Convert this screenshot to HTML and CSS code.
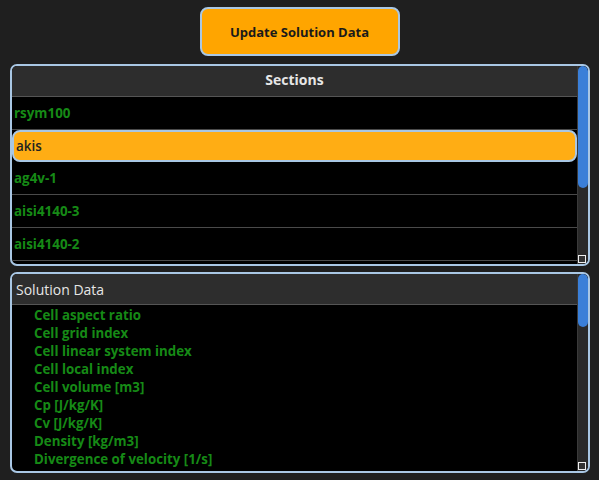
FILE: index.html
```html
<!DOCTYPE html>
<html lang="en">
<head>
    <meta charset="UTF-8">
    <title>Solution Data</title>
    <link rel="stylesheet" href="styles.css">
</head>
<body>

<div class="top">
    <button class="update-btn">Update Solution Data</button>
</div>

<!-- Sections list -->
<div class="panel sections">
    <div class="panel-body">
        <div class="panel-head center">Sections</div>
        <div class="rows">
            <div class="row">rsym100</div>
            <div class="row selected">akis</div>
            <div class="row">ag4v-1</div>
            <div class="row">aisi4140-3</div>
            <div class="row">aisi4140-2</div>
        </div>
    </div>
    <div class="scroll">
        <div class="thumb thumb-sections"></div>
        <div class="grip"></div>
    </div>
</div>

<!-- Solution data fields -->
<div class="panel data">
    <div class="panel-body">
        <div class="panel-head">Solution Data</div>
        <ul class="fields">
            <li>Cell aspect ratio</li>
            <li>Cell grid index</li>
            <li>Cell linear system index</li>
            <li>Cell local index</li>
            <li>Cell volume [m3]</li>
            <li>Cp [J/kg/K]</li>
            <li>Cv [J/kg/K]</li>
            <li>Density [kg/m3]</li>
            <li>Divergence of velocity [1/s]</li>
        </ul>
    </div>
    <div class="scroll">
        <div class="thumb thumb-data"></div>
        <div class="grip"></div>
    </div>
</div>

</body>
</html>
```

FILE: styles.css
```css
body {
    margin: 0;
    background-color: #1f1f1f;
    font-family: 'Open Sans', 'DejaVu Sans', sans-serif;
}

.top {
    display: flex;
    justify-content: center;
    padding-top: 7px;
}

.update-btn {
    width: 200px;
    height: 49px;
    background-color: #ffa500;
    border: 2px solid #a9c7e4;
    border-radius: 8px;
    font-family: inherit;
    font-size: 13px;
    font-weight: bold;
    color: #1a1a1a;
}

.panel {
    display: flex;
    margin: 0 9px 0 10px;
    border: 2px solid #a9c7e4;
    border-radius: 7px;
    background-color: #000;
    overflow: hidden;
}
.sections {
    margin-top: 8px;
    height: 198px;
}
.data {
    margin-top: 6px;
    height: 197px;
}

.panel-body {
    flex: 1;
    display: flex;
    flex-direction: column;
}

.panel-head {
    height: 30px;
    line-height: 31px;
    background-color: #2d2d2d;
    border-bottom: 1px solid #555;
    color: #e6e6e6;
    font-size: 14px;
    padding-left: 4px;
}
.panel-head.center {
    line-height: 28px;
    text-align: center;
    font-weight: bold;
    padding-left: 0;
}

.row {
    height: 32px;
    line-height: 32px;
    border-bottom: 1px solid #4a4a4a;
    padding-left: 2px;
    color: #168a16;
    font-size: 13.4px;
    font-weight: bold;
}
.row.selected {
    height: 28px;
    line-height: 28px;
    border: 2px solid #a9c7e4;
    border-radius: 8px;
    background-color: #ffad14;
    color: #222;
    font-weight: 600;
    padding-left: 2px;
}

.fields {
    list-style: none;
    margin: 0;
    padding: 1px 0 0 22px;
}
.fields li {
    height: 18px;
    line-height: 18px;
    color: #168a16;
    font-size: 13.3px;
    font-weight: bold;
}

.scroll {
    width: 10px;
    display: flex;
    flex-direction: column;
    background-color: #2a2a2a;
    border-left: 1px solid #3a3a3a;
}
.thumb {
    background-color: #3a7fd8;
    border-radius: 5px;
}
.thumb-sections {
    height: 122px;
}
.thumb-data {
    height: 53px;
}
.grip {
    margin-top: auto;
    margin-bottom: 1px;
    width: 6px;
    height: 6px;
    border: 1px solid #eee;
    background-color: #333;
}
```
